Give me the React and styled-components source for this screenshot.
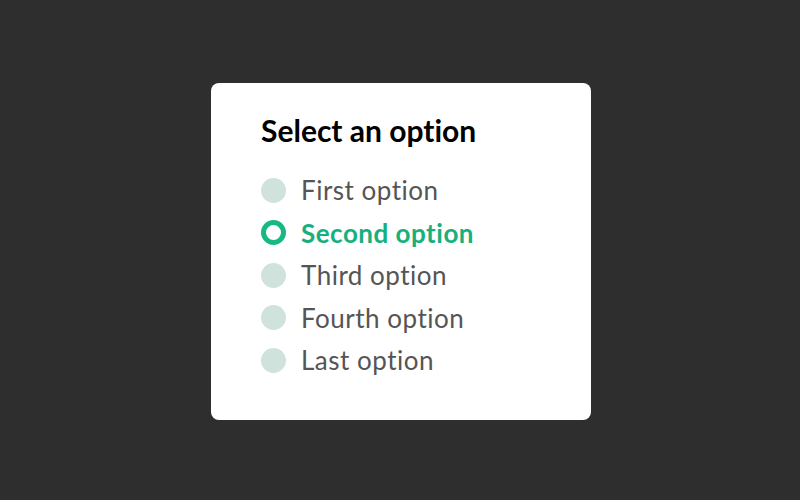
import React, { useState } from "react";
import styled, { createGlobalStyle } from "styled-components";

const GlobalStyle = createGlobalStyle`
  html, body {
    margin: 0;
    padding: 0;
    background: #2e2e2e;
    font-family: Lato, "Open Sans", sans-serif;
  }
`;

const Page = styled.div`
  width: 800px;
  height: 500px;
  box-sizing: border-box;
  padding: 3px 0 0 2px;
  display: flex;
  align-items: center;
  justify-content: center;
`;

const Card = styled.div`
  width: 380px;
  height: 337px;
  box-sizing: border-box;
  background: white;
  border-radius: 8px;
  padding: 26px 50px 0;
`;

const Title = styled.h2`
  margin: 0 0 18px;
  font-size: 30px;
  font-weight: 700;
  color: #000;
  line-height: 42px;
  font-variant-ligatures: none;
`;

const List = styled.div`
  display: flex;
  flex-direction: column;
`;

const Row = styled.label`
  display: flex;
  align-items: center;
  gap: 15px;
  height: 42.5px;
  cursor: pointer;
`;

const Dot = styled.span`
  width: 25px;
  height: 25px;
  border-radius: 50%;
  box-sizing: border-box;
  flex-shrink: 0;
  background: ${(p) => (p.$checked ? "white" : "#cfe2dc")};
  border: ${(p) => (p.$checked ? "5px solid #17b981" : "none")};
`;

const Label = styled.span`
  font-size: 26px;
  letter-spacing: 0.5px;
  font-variant-ligatures: none;
  font-weight: ${(p) => (p.$checked ? 700 : 400)};
  color: ${(p) => (p.$checked ? "#17b07c" : "#555555")};
`;

const options = [
  "First option",
  "Second option",
  "Third option",
  "Fourth option",
  "Last option",
];

export default function App() {
  const [selected, setSelected] = useState(1);
  return (
    <Page>
      <GlobalStyle />
      <Card>
        <Title>Select an option</Title>
        <List>
          {options.map((o, i) => (
            <Row key={o} onClick={() => setSelected(i)}>
              <Dot $checked={selected === i} />
              <Label $checked={selected === i}>{o}</Label>
            </Row>
          ))}
        </List>
      </Card>
    </Page>
  );
}
